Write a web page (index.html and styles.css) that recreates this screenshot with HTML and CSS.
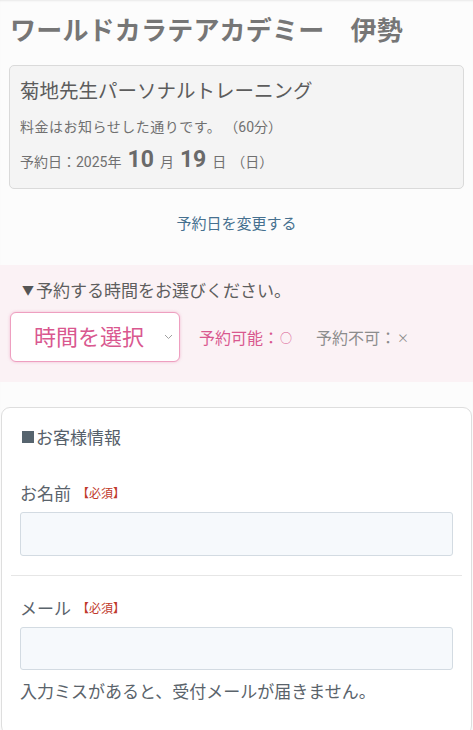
FILE: index.html
```html
<!DOCTYPE html>
<html lang="ja">
<head>
<meta charset="utf-8">
<title>予約</title>
<link rel="stylesheet" href="styles.css">
</head>
<body>
<div class="page">
  <h1 class="site-title">ワールドカラテアカデミー　伊勢</h1>

  <div class="course-card">
    <div class="course-name">菊地先生パーソナルトレーニング</div>
    <div class="course-price">料金はお知らせした通りです。<span class="duration">（60分）</span></div>
    <div class="course-date">予約日：2025年<b class="num">10</b>月<b class="num">19</b>日<span class="dow">（日）</span></div>
  </div>

  <div class="change-link-wrap"><a class="change-link" href="#">予約日を変更する</a></div>

  <section class="time-section">
    <div class="time-heading"><span class="tri">▼</span>予約する時間をお選びください。</div>
    <div class="time-row">
      <div class="time-select">
        <span class="time-select-text">時間を選択</span>
        <svg class="chev" width="9" height="6" viewBox="0 0 9 6"><path d="M1 1 L4.5 4.5 L8 1" fill="none" stroke="#a0a0a0" stroke-width="1"/></svg>
      </div>
      <span class="legend ok">予約可能：<span class="mark">○</span></span>
      <span class="legend ng">予約不可：<span class="mark">×</span></span>
    </div>
  </section>

  <section class="form-box">
    <div class="form-heading"><span class="sq"></span>お客様情報</div>
    <div class="field">
      <div class="field-label">お名前<span class="req">【必須】</span></div>
      <div class="input"></div>
    </div>
    <hr class="divider">
    <div class="field">
      <div class="field-label">メール<span class="req">【必須】</span></div>
      <div class="input input-mail"></div>
      <div class="note">入力ミスがあると、受付メールが届きません。</div>
    </div>
  </section>
</div>
</body>
</html>
```

FILE: styles.css
```css
* { box-sizing: border-box; }
html, body { margin: 0; padding: 0; }
body {
  background: #fcfcfc;
  font-family: Roboto, "Noto Sans CJK JP", sans-serif;
  color: #555;
  width: 473px;
  height: 730px;
  overflow: hidden;
}
.page {
  box-shadow: inset 0 2px 2px -1px rgba(0,0,0,0.08);
  min-height: 730px;
}
.site-title {
  margin: 0;
  padding: 11px 10px 0;
  font-size: 26px;
  line-height: 36px;
  font-weight: 700;
  color: #767676;
  letter-spacing: 0.2px;
  font-family: "Noto Sans CJK JP", sans-serif;
}
.course-card {
  margin: 18px 9px 0;
  background: #f4f4f4;
  border: 1px solid #dadada;
  border-radius: 5px;
  padding: 9px 10px 11px;
  color: #707070;
}
.course-name {
  font-family: "Noto Sans CJK JP", sans-serif;
  font-size: 19.5px;
  line-height: 30px;
  color: #5c5c5c;
}
.course-price {
  margin-top: 10px;
  font-size: 14px;
  line-height: 24px;
  letter-spacing: 0.5px;
}
.duration { margin-left: 10px; letter-spacing: 0; }
.course-date {
  margin-top: 6px;
  font-size: 14px;
  line-height: 30px;
  display: flex;
  align-items: baseline;
}
.course-date .num {
  font-size: 23px;
  font-weight: 700;
  margin: 0 6px;
  color: #6a6a6a;
}
.dow { margin-left: 5px; }
.change-link-wrap {
  margin-top: 22px;
  text-align: center;
  line-height: 24px;
}
.change-link {
  color: #46708f;
  font-size: 15px;
  text-decoration: none;
  font-family: "Noto Sans CJK JP", sans-serif;
}
.time-section {
  margin-top: 29px;
  background: #fbf2f5;
  padding: 12px 10px 20px;
}
.time-heading {
  font-size: 17px;
  line-height: 26px;
  color: #5e5e5e;
  padding-left: 12px;
  font-family: "Noto Sans CJK JP", sans-serif;
  display: flex;
  align-items: center;
}
.tri { font-size: 12px; margin-right: 2px; color: #555; }
.time-row {
  margin-top: 9px;
  display: flex;
  align-items: center;
}
.time-select {
  width: 170px;
  height: 50px;
  background: #fff;
  border: 1px solid #ee9fc0;
  border-radius: 6px;
  box-shadow: 0 0 3px rgba(236,130,175,0.5);
  display: flex;
  align-items: center;
  padding-left: 23px;
  padding-right: 6px;
}
.time-select-text {
  flex: 1;
  font-size: 22px;
  line-height: 30px;
  margin-top: -4px;
  color: #d9588f;
  font-family: "Noto Sans CJK JP", sans-serif;
}
.chev { display: block; }
.legend {
  font-size: 16px;
  font-family: "Noto Sans CJK JP", sans-serif;
  display: flex;
  align-items: center;
}
.mark { font-size: 12px; margin-left: 1px; }
.legend.ok { color: #d9588f; margin-left: 19px; }
.legend.ng { color: #8c8c8c; margin-left: 24px; }
.form-box {
  margin: 25px 1px 0;
  background: #fff;
  border: 1px solid #dedede;
  border-radius: 9px;
  padding: 16px 9px 30px;
  font-family: "Noto Sans CJK JP", sans-serif;
}
.form-heading {
  font-size: 17px;
  line-height: 26px;
  color: #56606a;
  padding-left: 9px;
  display: flex;
  align-items: center;
}
.sq {
  width: 12px;
  height: 12px;
  background: #56646e;
  margin: 0 2px 0 2px;
}
.field { padding: 0 9px 0 9px; }
.form-heading + .field { margin-top: 30px; }
.field-label {
  font-size: 17px;
  line-height: 26px;
  color: #5a636b;
  display: flex;
  align-items: center;
}
.req {
  font-size: 12px;
  color: #c0392b;
  margin-left: 6px;
}
.input {
  margin-top: 6px;
  height: 44px;
  background: #f6f9fc;
  border: 1px solid #d3dbe2;
  border-radius: 3px;
}
.input-mail { height: 43px; }
.divider {
  border: 0;
  border-top: 1px solid #e6e6e6;
  margin: 19px 0 0;
}
.divider + .field { margin-top: 19px; }
.note {
  margin-top: 8px;
  font-size: 17px;
  line-height: 26px;
  color: #5a636b;
}
```
